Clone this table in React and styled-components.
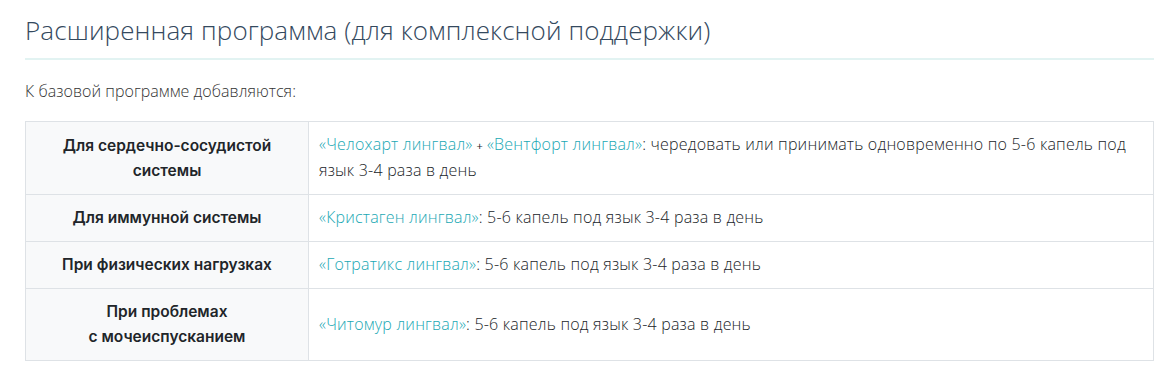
import React from 'react'
import styled, { createGlobalStyle } from 'styled-components'

const GlobalStyle = createGlobalStyle`
  body {
    margin: 0;
    background: #ffffff;
    font-family: "Open Sans", "Noto Sans", sans-serif;
  }
`

const Section = styled.section`
  width: 1129px;
  padding: 0 0 0 25px;
`

const Title = styled.h2`
  margin: 0;
  padding: 14px 0 12px;
  font-family: "Open Sans", sans-serif;
  font-size: 26px;
  font-weight: 300;
  letter-spacing: 0.1px;
  line-height: 32px;
  color: #34495e;
  border-bottom: 2px solid #e2f3f2;
`

const Lead = styled.p`
  margin: 20px 0 19px;
  font-size: 16px;
  font-weight: 300;
  letter-spacing: 0.05px;
  line-height: 22px;
  color: #333333;
`

const Table = styled.table`
  width: 100%;
  border-collapse: collapse;
  font-size: 16px;
  letter-spacing: 0.2px;
  line-height: 25px;
`

const HeadCell = styled.th`
  width: 283px;
  box-sizing: border-box;
  padding: 10px 12px 11px;
  border: 1px solid #dee2e6;
  background: #f8f9fa;
  font-family: Inter, Roboto, sans-serif;
  font-weight: 600;
  font-size: 15.5px;
  letter-spacing: 0;
  color: #212529;
  text-align: center;
  vertical-align: middle;
`

const Cell = styled.td`
  padding: 10px 10px 11px;
  border: 1px solid #dee2e6;
  font-weight: 300;
  color: #212529;
  vertical-align: middle;
`

const Drug = styled.a`
  color: #1aa8b4;
  text-decoration: none;
`

const Plus = styled.span`
  margin: 0 4px;
  font-size: 11px;
  font-weight: 400;
`

const rows = [
  {
    title: ['Для сердечно-сосудистой', 'системы'],
    drugs: ['«Челохарт лингвал»', '«Вентфорт лингвал»'],
    text: ': чередовать или принимать одновременно по 5-6 капель под язык 3-4 раза в день',
  },
  {
    title: ['Для иммунной системы'],
    drugs: ['«Кристаген лингвал»'],
    text: ': 5-6 капель под язык 3-4 раза в день',
  },
  {
    title: ['При физических нагрузках'],
    drugs: ['«Готратикс лингвал»'],
    text: ': 5-6 капель под язык 3-4 раза в день',
  },
  {
    title: ['При проблемах', 'с мочеиспусканием'],
    drugs: ['«Читомур лингвал»'],
    text: ': 5-6 капель под язык 3-4 раза в день',
  },
]

const App = () => {
  return (
    <>
      <GlobalStyle />
      <Section>
        <Title>Расширенная программа (для комплексной поддержки)</Title>
        <Lead>К базовой программе добавляются:</Lead>
        <Table>
          <tbody>
            {rows.map((row, index) => (
              <tr key={index}>
                <HeadCell>
                  {row.title.map((line, i) => (
                    <React.Fragment key={i}>
                      {i > 0 && <br />}
                      {line}
                    </React.Fragment>
                  ))}
                </HeadCell>
                <Cell>
                  {row.drugs.map((drug, i) => (
                    <React.Fragment key={i}>
                      {i > 0 && <Plus>+</Plus>}
                      <Drug href="#">{drug}</Drug>
                    </React.Fragment>
                  ))}
                  {row.text}
                </Cell>
              </tr>
            ))}
          </tbody>
        </Table>
      </Section>
    </>
  )
}

export default App
